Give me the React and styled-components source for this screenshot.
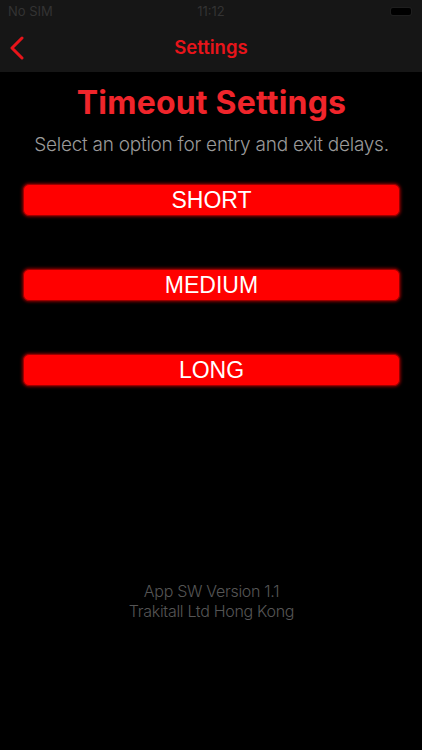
import React from 'react';
import styled, {createGlobalStyle} from 'styled-components';

const Global = createGlobalStyle`
  html, body { margin: 0; padding: 0; background: #000; }
  body { font-family: "Liberation Sans", Arial, sans-serif; }
`

const Screen = styled.div`
  width: 422px;
  height: 750px;
  background: #000;
  display: flex;
  flex-direction: column;
`

const TopBar = styled.div`
  background: #161616;
  height: 72px;
  display: flex;
  flex-direction: column;
`

const Status = styled.div`
  height: 22px;
  display: flex;
  align-items: center;
  justify-content: space-between;
  padding: 0 11px 0 8px;
  font-family: "Inter", sans-serif;
  font-size: 13px;
  color: #333;
  position: relative;
`

const Clock = styled.span`
  position: absolute;
  left: 0;
  right: 0;
  text-align: center;
  font-size: 13px;
`

const Battery = styled.div`
  width: 20px;
  height: 7px;
  background: #000;
  border-radius: 2px;
  box-shadow: 0 0 0 1px #1e1e1e;
`

const Nav = styled.div`
  flex: 1;
  display: flex;
  align-items: center;
  justify-content: center;
  position: relative;
  color: #e8141a;
  font-family: "Inter", sans-serif;
  font-weight: 600;
  font-size: 18.5px;
`

const Back = styled.svg`
  position: absolute;
  left: 9px;
  top: 14px;
`

const Body = styled.div`
  flex: 1;
  display: flex;
  flex-direction: column;
  align-items: center;
  padding: 12px 22px 0 23px;
`

const Title = styled.h1`
  margin: 0;
  font-family: "Inter", sans-serif;
  font-weight: 700;
  font-size: 32px;
  color: #f0252b;
  line-height: 38px;
  letter-spacing: 0.2px;
`

const Sub = styled.p`
  margin: 11px 0 0;
  font-family: "Inter", sans-serif;
  font-weight: 300;
  font-size: 19px;
  color: #9a9a9a;
  line-height: 24px;
  letter-spacing: -0.25px;
`

const Options = styled.div`
  align-self: stretch;
  display: flex;
  flex-direction: column;
  gap: 53px;
  margin-top: 27px;
`

const Option = styled.button`
  height: 32px;
  border: 1px solid #9a0000;
  border-radius: 6px;
  background: #ff0000;
  box-shadow: 0 0 3px 1px rgba(160, 0, 0, 0.8);
  color: #fff;
  font-family: "Liberation Sans", Arial, sans-serif;
  font-size: 23px;
  padding: 0;
  cursor: pointer;
`

const Footer = styled.div`
  margin-top: 195px;
  text-align: center;
  font-family: "Inter", sans-serif;
  font-weight: 300;
  font-size: 16px;
  line-height: 20px;
  color: #555;
  letter-spacing: -0.3px;
`

const App = () => (
  <Screen>
    <Global />
    <TopBar>
      <Status>
        <span>No SIM</span>
        <Clock>11:12</Clock>
        <Battery />
      </Status>
      <Nav>
        <Back width="16" height="24" viewBox="0 0 16 24">
          <path d="M13 2 L3 12 L13 22" fill="none" stroke="#e8141a" strokeWidth="3" strokeLinecap="round" strokeLinejoin="round" />
        </Back>
        Settings
      </Nav>
    </TopBar>
    <Body>
      <Title>Timeout Settings</Title>
      <Sub>Select an option for entry and exit delays.</Sub>
      <Options>
        <Option>SHORT</Option>
        <Option>MEDIUM</Option>
        <Option>LONG</Option>
      </Options>
      <Footer>
        App SW Version 1.1<br />
        Trakitall Ltd Hong Kong
      </Footer>
    </Body>
  </Screen>
);

export default App;
